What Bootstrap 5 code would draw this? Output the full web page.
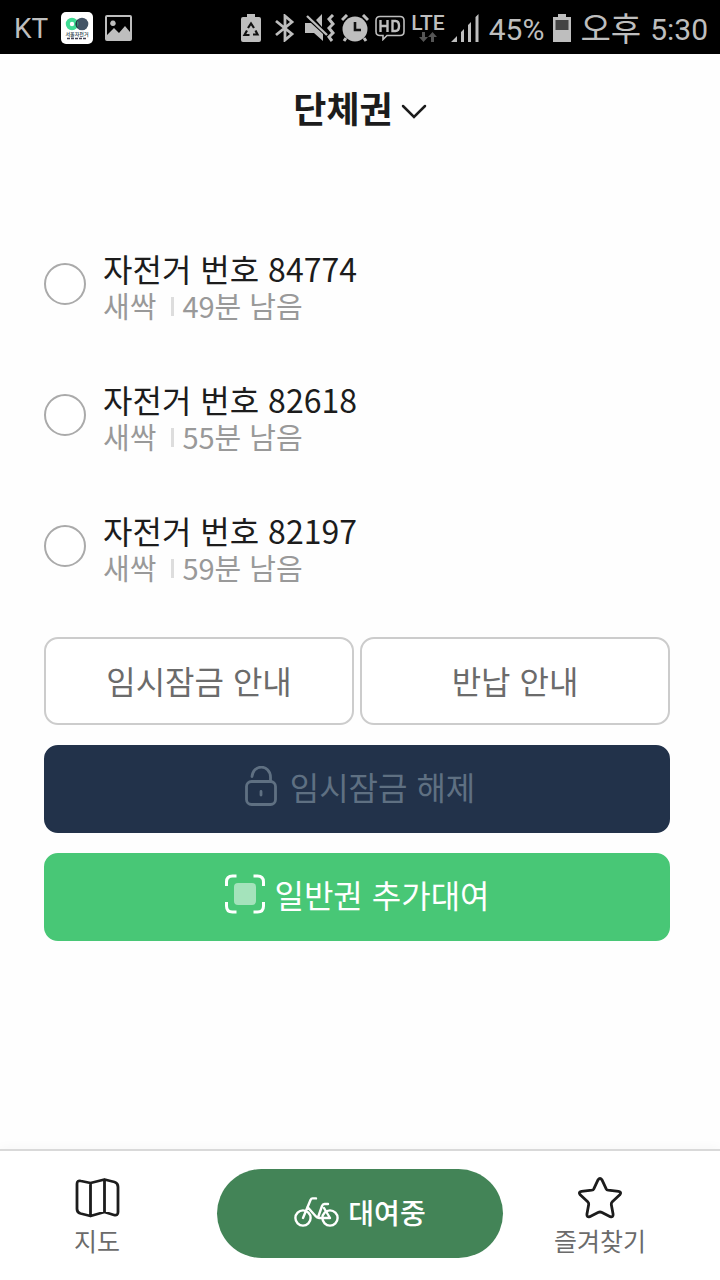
<!DOCTYPE html>
<html lang="ko">
<head>
<meta charset="utf-8">
<meta name="viewport" content="width=device-width, initial-scale=1">
<title>단체권</title>
<link href="https://cdn.jsdelivr.net/npm/bootstrap@5.3.0/dist/css/bootstrap.min.css" rel="stylesheet">
<style>
  body { font-family: "Noto Sans CJK KR", sans-serif; color: #1c1c1c; background: #fefefe; }
  svg { display: block; flex: none; }
  .status-bar { height: 54px; padding: 2px 12px 0 14px; background: #000; color: #bebebe; font-family: Roboto, "Noto Sans CJK KR", sans-serif; font-size: 30px; line-height: 48px; white-space: nowrap; }
  .status-bar .carrier { font-size: 28px; width: 47px; padding-top: 2px; }
  .status-bar .meridiem { font-size: 33px; }
  .status-icons { gap: 6px; }
  .status-text { gap: 9px; margin-left: 4px; }
  .status-text span { padding-top: 4px; }
  .lte { font-size: 21px; line-height: 18px; font-weight: 500; }
  .title-btn { font-size: 36px; line-height: 48px; font-weight: 700; color: #1c1c1c; }
  .title-btn svg { margin-top: 8px; }
  .title-bar { padding-top: 29px; padding-bottom: 118px; }
  .content { padding: 0 50px 0 44px; }
  .bike-list { gap: 57px; margin-bottom: 52px; }
  .bike-row { gap: 17px; }
  .bike-row .form-check-input { width: 42px; height: 42px; margin: 0 0 4px; border: 2px solid #aaa; background-color: #fff; flex: none; }
  .bike-row .form-check-input:checked { background-color: #48c776; border-color: #48c776; }
  .bike-name { font-size: 32px; line-height: 38px; }
  .bike-info { font-size: 29px; line-height: 36px; color: #999; }
  .divider { width: 3px; height: 19px; background: #ddd; margin: 2px 8px 0 15px; }
  .action { font-size: 32px; line-height: 48px; padding: 15px 8px 21px; border: 2px solid transparent; border-radius: 14px; }
  .action-outline, .action-outline:hover { padding: 17px 8px 19px; border-color: #ccc; color: #6b6b6b; background: #fff; }
  .action-dark, .action-dark:disabled { gap: 13px; padding-left: 14px; background: #22324a; border-color: #22324a; color: #5f7082; opacity: 1; }
  .action-green, .action-green:hover { background: #48c776; border-color: #48c776; color: #fff; }
  .actions { gap: 20px; }
  .pair { gap: 6px; }
  .bottom-bar { border-top: 2px solid #d9d9d9; padding: 18px 0 22px; background: #fff; box-shadow: 0 -2px 10px #00000008; }
  .tab-link { color: #6b6b6b; font-size: 25px; line-height: 36px; gap: 3px; padding: 7px 23px 0 0; }
  .tab-link svg { color: #1c1c1c; }
  .tab-wide { width: 286px; height: 89px; padding-bottom: 10px; background: #438457; color: #fff; font-size: 28px; font-weight: 500; }
  .tab-wide:hover { background: #3b774d; color: #fff; }
</style>
</head>
<body class="d-flex flex-column min-vh-100">

<header class="status-bar d-flex align-items-center justify-content-between">
  <div class="d-flex align-items-center">
    <span class="carrier">KT</span>
    <svg width="32" height="32" viewBox="0 0 32 32"><rect width="32" height="32" rx="5" fill="#fff"/><circle cx="21" cy="12" r="6.300" fill="#435466"/><circle cx="11" cy="12" r="4.200" fill="#fff" stroke="#3fdc94" stroke-width="4"/><path d="M16.500 8a6.300 6.300 0 0 0 0 8" fill="#263746" stroke="#263746"/><text x="16" y="24" text-anchor="middle" font-family="Noto Sans CJK KR" font-size="5" font-weight="500" fill="#263746">서울자전거</text><path d="M6 26.500h20" stroke="#445" stroke-width="1.500" stroke-dasharray="3 1"/></svg>
    <svg class="ms-2" width="32" height="26" viewBox="0 0 32 26"><path fill="#bebebe" fill-rule="evenodd" d="M6 0h23a2 2 0 0 1 2 2v22a2 2 0 0 1-2 2H6a2 2 0 0 1-2-2V2a2 2 0 0 1 2-2zm0 2v18l7-7 5 5 6-7 5 6V2zM12 5.500a2.800 2.800 0 1 1-.1 0z"/></svg>
  </div>
  <div class="status-icons d-flex align-items-center">
    <svg class="me-1" width="20" height="28" viewBox="0 0 20 28"><path fill="#bebebe" d="M6 0h8v3h4q2 0 2 2v21q0 2-2 2H2q-2 0-2-2V5q0-2 2-2h4z"/><path d="M7 14l3-4.500L13 14M14.500 16.500l2 4H12M8.500 21H3.500l2.500-4.500" fill="none" stroke="#111" stroke-width="2.200"/></svg>
    <svg width="28" height="28" viewBox="0 0 28 28"><path d="M5 7l16 13-7 6V2l7 6L5 21" fill="none" stroke="#bebebe" stroke-width="2.800"/></svg>
    <svg width="30" height="28" viewBox="0 0 30 28"><path fill="#bebebe" d="M0 9h6l12 11v7l-9-8H0zM11 6l6-6v13z"/><path d="M2 2l20 19" stroke="#bebebe" stroke-width="2.400"/><path d="M28 1l-4 4 4 5-4 4 4 5-4 4 3 4" fill="none" stroke="#bebebe" stroke-width="3"/></svg>
    <svg width="28" height="28" viewBox="0 0 28 28"><circle cx="14" cy="15" r="12.500" fill="#bebebe"/><path d="M1 6l5-5M27 6l-5-5M5 24l-2 3M23 24l2 3" stroke="#bebebe" stroke-width="3"/><path d="M14 8v8h6" fill="none" stroke="#111" stroke-width="2.600"/></svg>
    <svg width="30" height="26" viewBox="0 0 30 26"><path d="M5 1.500h20q4 0 4 4v11q0 4-4 4H12l-4 4v-4H5q-4 0-4-4v-11q0-4 4-4z" fill="none" stroke="#bebebe" stroke-width="1.600"/><path d="M5.500 5v12M12.500 5v12M6 11h6M17.500 4.800v12.400M16.500 6h4q3.500 0 3.500 5t-3.500 5h-4" fill="none" stroke="#bebebe" stroke-width="2.400"/></svg>
    <div class="lte d-flex flex-column align-items-center"><span>LTE</span><svg width="18" height="10" viewBox="0 0 18 10"><path fill="#555" d="M3 0h3v5h3L4.500 10 0 5h3zM12 10h3V5h3l-4.500-5L9 5h3z"/></svg></div>
    <svg width="28" height="28" viewBox="0 0 28 28"><path fill="#bebebe" d="M0 28l6-6v6zM10 18l3-3v13h-3zM17 11l3-3v20h-3zM24.500 3l3-3v28h-3z"/></svg>
    <div class="status-text d-flex align-items-center">
      <span>45%</span>
      <svg width="18" height="28" viewBox="0 0 18 28"><path fill="#bebebe" d="M5 0h8v3h5v25H0V3h5z"/><path fill="#444" d="M2.500 6h13v10h-13z"/></svg>
      <span class="meridiem">오후</span><span>5:30</span>
    </div>
  </div>
</header>

<div class="title-bar d-flex justify-content-center">
  <button type="button" class="title-btn btn border-0 p-0 d-flex align-items-center gap-2">단체권
    <svg width="26" height="16" viewBox="0 0 26 16"><path d="M2 3l11 11L24 3" fill="none" stroke="currentColor" stroke-width="2.500" stroke-linecap="round"/></svg>
  </button>
</div>

<main class="content flex-grow-1">
  <div class="bike-list d-flex flex-column">
    <div class="bike-row d-flex align-items-center">
      <input class="form-check-input" type="radio" name="bike" id="bike1">
      <label for="bike1"><span class="bike-name d-block">자전거 번호 84774</span><span class="bike-info d-flex align-items-center">새싹<span class="divider"></span>49분 남음</span></label>
    </div>
    <div class="bike-row d-flex align-items-center">
      <input class="form-check-input" type="radio" name="bike" id="bike2">
      <label for="bike2"><span class="bike-name d-block">자전거 번호 82618</span><span class="bike-info d-flex align-items-center">새싹<span class="divider"></span>55분 남음</span></label>
    </div>
    <div class="bike-row d-flex align-items-center">
      <input class="form-check-input" type="radio" name="bike" id="bike3">
      <label for="bike3"><span class="bike-name d-block">자전거 번호 82197</span><span class="bike-info d-flex align-items-center">새싹<span class="divider"></span>59분 남음</span></label>
    </div>
  </div>
  <div class="actions d-flex flex-column">
    <div class="pair d-flex">
      <button type="button" class="btn action action-outline w-50">임시잠금 안내</button>
      <button type="button" class="btn action action-outline w-50">반납 안내</button>
    </div>
    <button type="button" class="btn action action-dark d-flex align-items-center justify-content-center" disabled>
      <svg width="32" height="40" viewBox="0 0 32 40"><g fill="none" stroke="currentColor" stroke-width="2.800" stroke-linecap="round"><rect x="1.500" y="15.500" width="29" height="23" rx="5"/><path d="M7 10.500C8-2 25-2 25.500 11v4M16 25.500v3.500"/></g></svg>임시잠금 해제
    </button>
    <button type="button" class="btn action action-green d-flex align-items-center justify-content-center gap-2">
      <svg width="42" height="40" viewBox="0 0 42 40"><path d="M2.500 12V8q0-6 6-6h4M29.500 2h4q6 0 6 6v4M39.500 28v4q0 6-6 6h-4M12.500 38h-4q-6 0-6-6v-4" fill="none" stroke="#fff" stroke-width="3"/><rect x="10" y="9" width="22" height="22" rx="4" fill="#a4e3bb"/></svg>일반권 추가대여
    </button>
  </div>
</main>

<nav class="bottom-bar d-flex align-items-center">
  <a href="#map" class="tab-link text-decoration-none d-flex flex-column align-items-center flex-fill w-25">
    <svg width="46" height="42" viewBox="0 0 46 42"><path d="M3 7q0-4 4-3l9.500 2L30.500 2.500l10 2.500q3.500 1 3.500 5v25q0 4-4 3l-9.500-3-14 4-10-2.500Q3 35.500 3 32zM16.500 6v33M30.500 2.500V35" fill="none" stroke="currentColor" stroke-width="2.800" stroke-linejoin="round"/></svg>지도
  </a>
  <a href="#ride" class="tab-wide btn border-0 rounded-pill d-flex align-items-center justify-content-center gap-2 flex-shrink-0">
    <svg width="46" height="30" viewBox="0 0 46 30"><g fill="none" stroke="#fff" stroke-width="2.400" stroke-linecap="round" stroke-linejoin="round"><circle cx="9" cy="21" r="7.600"/><circle cx="36" cy="21" r="7.600"/><path d="M9 21 16.500 3q.7-1.600 2-1.600H22M13.500 10l8 9q1.500 2 3.500 2h11L30 11M24 20.500 28 9q.8-2 2.500-2H34"/></g></svg>대여중
  </a>
  <a href="#favorites" class="tab-link text-decoration-none d-flex flex-column align-items-center flex-fill w-25">
    <svg width="46" height="42" viewBox="0 0 46 42"><path d="M21 2.800q2-2.600 4 0l4.200 9q.6 1.200 2 1.400l10.300 1.100q3.500.7 1.300 3.500l-7.500 7q-1.300 1.300-1 2.800l1.800 9.600q.2 3.500-2.800 2.500l-8.300-4.200q-2-1-4 0l-8.300 4.200q-3 1-2.800-2.500l1.800-9.600q.3-1.500-1-2.800l-7.500-7q-2.200-2.800 1.300-3.500l10.300-1.100q1.400-.2 2-1.400z" fill="none" stroke="currentColor" stroke-width="2.800" stroke-linejoin="round"/></svg>즐겨찾기
  </a>
</nav>

<script src="https://cdn.jsdelivr.net/npm/bootstrap@5.3.0/dist/js/bootstrap.bundle.min.js"></script>
</body>
</html>
